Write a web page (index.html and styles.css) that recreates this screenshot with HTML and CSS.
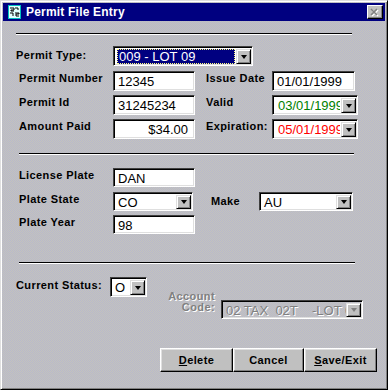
FILE: index.html
```html
<!DOCTYPE html>
<html lang="en">
<head>
    <meta charset="UTF-8">
    <title>Permit File Entry</title>
    <link rel="stylesheet" href="styles.css">
</head>
<body>

    <div class="window">
        <!-- title bar -->
        <div class="titlebar">
            <svg class="app-icon" width="13" height="14" viewBox="0 0 13 14">
                <rect x="0.5" y="0.5" width="12" height="13" fill="#ffffff" stroke="#00c0c0"/>
                <rect x="1" y="1" width="11" height="12" fill="#e0ffff"/>
                <path d="M2 3h4v2H3v1h3M7 3h3v2M2 8h3v3M7 8h4v1H8v2h3" fill="none" stroke="#000000" stroke-width="1"/>
            </svg>
            <span class="title">Permit File Entry</span>
            <span class="close-btn">
                <svg width="10" height="9" viewBox="0 0 10 9">
                    <path d="M2 2l6 6M8 2l-6 6" stroke="#ffffff" stroke-width="1.6"/>
                    <path d="M1 1l6 6M7 1l-6 6" stroke="#808080" stroke-width="1.6"/>
                </svg>
            </span>
        </div>

        <div class="content">
            <div class="sep sep-top"></div>

            <!-- permit -->
            <div class="row row-type">
                <label class="lbl lbl-type">Permit Type:</label>
                <div class="combo combo-type">
                    <div class="value selected"><span>009 - LOT 09</span></div>
                    <span class="arrow"></span>
                </div>
            </div>

            <div class="row row-indent row-2">
                <label class="lbl lbl-left">Permit Number</label>
                <div class="field field-left">12345</div>
                <label class="lbl lbl-right">Issue Date</label>
                <div class="field field-date">01/01/1999</div>
            </div>

            <div class="row row-indent row-3">
                <label class="lbl lbl-left">Permit Id</label>
                <div class="field field-left">31245234</div>
                <label class="lbl lbl-right">Valid</label>
                <div class="combo combo-date">
                    <div class="value green">03/01/1999</div>
                    <span class="arrow"></span>
                </div>
            </div>

            <div class="row row-indent row-3">
                <label class="lbl lbl-left">Amount Paid</label>
                <div class="field field-left money">$34.00</div>
                <label class="lbl lbl-right">Expiration:</label>
                <div class="combo combo-date">
                    <div class="value red">05/01/1999</div>
                    <span class="arrow"></span>
                </div>
            </div>

            <div class="sep sep-mid"></div>

            <!-- vehicle -->
            <div class="row row-indent row-5">
                <label class="lbl lbl-left">License Plate</label>
                <div class="field field-left short">DAN</div>
            </div>

            <div class="row row-indent row-6">
                <label class="lbl lbl-left">Plate State</label>
                <div class="combo combo-state short">
                    <div class="value">CO</div>
                    <span class="arrow"></span>
                </div>
                <label class="lbl lbl-make">Make</label>
                <div class="combo combo-make short">
                    <div class="value">AU</div>
                    <span class="arrow"></span>
                </div>
            </div>

            <div class="row row-indent row-7">
                <label class="lbl lbl-left">Plate Year</label>
                <div class="field field-left short">98</div>
            </div>

            <div class="sep sep-low"></div>

            <!-- status -->
            <div class="status-row">
                <label class="lbl lbl-status">Current Status:</label>
                <div class="combo combo-status">
                    <div class="value">O</div>
                    <span class="arrow"></span>
                </div>
                <div class="account">
                    <label class="lbl lbl-account">Account<br>Code:</label>
                    <div class="combo combo-account disabled">
                        <div class="value">02 TAX  02T    -LOT 02</div>
                        <span class="arrow"></span>
                    </div>
                </div>
            </div>

            <div class="buttons">
                <button class="btn btn-delete"><u>D</u>elete</button>
                <button class="btn btn-cancel">Cancel</button>
                <button class="btn btn-save"><u>S</u>ave/Exit</button>
            </div>
        </div>
    </div>

</body>
</html>
```

FILE: styles.css
```css
body {
    margin: 0;
    background-color: #ffffff;
    font-family: "Liberation Sans", Arial, sans-serif;
}

.window {
    width: 388px;
    height: 390px;
    box-sizing: border-box;
    padding: 2px;
    border: 1px solid;
    border-color: #dfdfdf #000000 #000000 #dfdfdf;
    box-shadow: inset 1px 1px #ffffff, inset -1px -1px #808080;
    background-color: #bfbfc4;
    background-image: repeating-conic-gradient(#c4c4bc 0 25%, #b8b8cc 0 50%);
    background-size: 2px 2px;
    display: flex;
    flex-direction: column;
}

/* title bar */
.titlebar {
    height: 18px;
    background-color: #000080;
    display: flex;
    align-items: center;
    padding: 0 2px 0 5px;
    color: #ffffff;
}

.app-icon {
    display: block;
}

.title {
    margin-left: 5px;
    font-weight: bold;
    font-size: 12px;
    letter-spacing: 0.2px;
}

.close-btn {
    margin-left: auto;
    width: 16px;
    height: 14px;
    box-sizing: border-box;
    background-color: #c0c0c0;
    border: 1px solid;
    border-color: #ffffff #000000 #000000 #ffffff;
    box-shadow: inset -1px -1px #808080;
    display: flex;
    align-items: center;
    justify-content: center;
}

.close-btn svg {
    display: block;
}

/* form area */
.content {
    padding: 0 8px 0 13px;
    display: flex;
    flex-direction: column;
}

.sep {
    height: 1px;
    background-color: #000000;
    border-bottom: 1px solid #ffffff;
}

.sep-top {
    margin-top: 12px;
    width: 336px;
}

.sep-mid {
    margin-top: 14px;
    margin-left: 3px;
    width: 335px;
}

.sep-low {
    margin-top: 28px;
    margin-left: 3px;
    width: 336px;
}

.row {
    display: flex;
    align-items: flex-start;
}

.row-indent {
    padding-left: 3px;
}

.row-type {
    margin-top: 11px;
}

.row-2 {
    margin-top: 5px;
}

.row-3 {
    margin-top: 4px;
}

.row-5 {
    margin-top: 13px;
}

.row-6 {
    margin-top: 5px;
}

.row-7 {
    margin-top: 4px;
}

.lbl {
    font-size: 11px;
    font-weight: bold;
    line-height: 13px;
    color: #000000;
    padding-top: 1px;
    letter-spacing: 0.4px;
    white-space: nowrap;
}

.lbl-type {
    width: 97px;
    padding-top: 3px;
}

.lbl-left {
    width: 94px;
}

.lbl-right {
    width: 66px;
    margin-left: 11px;
}

.lbl-make {
    width: 48px;
    margin-left: 18px;
    padding-top: 3px;
}

/* sunken boxes */
.field,
.combo {
    box-sizing: border-box;
    height: 20px;
    background-color: #ffffff;
    border: 1px solid;
    border-color: #404040 #ffffff #ffffff #404040;
    box-shadow: inset 1px 1px #000000, inset -1px -1px #dfdfdf;
    font-size: 13px;
    line-height: 18px;
    color: #000000;
    white-space: nowrap;
    overflow: hidden;
}

.field {
    padding: 1px 4px 0 4px;
}

.short {
    height: 19px;
    line-height: 17px;
}

.field-left {
    width: 82px;
}

.field-date {
    width: 83px;
}

.money {
    text-align: right;
    padding-right: 6px;
}

.combo {
    display: flex;
    padding: 2px 1px 1px 2px;
}

.combo .value {
    flex: 1;
    overflow: hidden;
    padding-left: 2px;
    line-height: 16px;
}

.short .value {
    line-height: 15px;
}

.combo .arrow {
    width: 15px;
    flex: none;
    box-sizing: border-box;
    background-color: #c0c0c0;
    border: 1px solid;
    border-color: #dfdfdf #000000 #000000 #dfdfdf;
    box-shadow: inset 1px 1px #ffffff, inset -1px -1px #808080;
    display: flex;
    align-items: center;
    justify-content: center;
}

.combo .arrow::after {
    content: "";
    border-left: 3.5px solid transparent;
    border-right: 3.5px solid transparent;
    border-top: 4px solid #000000;
}

.combo-type {
    width: 140px;
}

.combo-type .value {
    padding: 0 0 0 1px;
}

.selected span {
    display: block;
    height: 100%;
    box-sizing: border-box;
    background-color: #000080;
    color: #ffffff;
    outline: 1px dotted #ffff80;
    outline-offset: -1px;
    padding-left: 2px;
    margin-right: 1px;
}

.combo-date {
    width: 86px;
}

.combo-date .value {
    padding-left: 3px;
    margin-right: 1px;
}

.green {
    color: #008000;
}

.red {
    color: #ff0000;
}

.combo-state {
    width: 80px;
}

.combo-make {
    width: 94px;
}

/* status */
.status-row {
    display: flex;
    align-items: flex-start;
    margin-top: 13px;
}

.lbl-status {
    width: 94px;
    padding-top: 2px;
}

.combo-status {
    width: 37px;
}

.account {
    display: flex;
    align-items: flex-start;
    margin-left: 21px;
    padding-top: 13px;
}

.lbl-account {
    width: 47px;
    text-align: right;
    line-height: 11px;
    color: #808080;
    text-shadow: 1px 1px #ffffff;
}

.combo-account {
    width: 142px;
    height: 19px;
    margin-left: 6px;
    margin-top: 10px;
}

.disabled {
    background: transparent;
}

.disabled .value {
    color: #808080;
    text-shadow: 1px 1px #ffffff;
    white-space: pre;
    line-height: 15px;
}

.disabled .arrow::after {
    border-top-color: #808080;
}

/* buttons */
.buttons {
    display: flex;
    justify-content: flex-end;
    margin-top: 29px;
}

.btn {
    height: 24px;
    box-sizing: border-box;
    padding: 0;
    font-family: "Liberation Sans", Arial, sans-serif;
    font-size: 11px;
    font-weight: bold;
    letter-spacing: 0.4px;
    color: #000000;
    background-color: #c0c0c0;
    border: 1px solid;
    border-color: #ffffff #000000 #000000 #ffffff;
    box-shadow: inset -1px -1px #808080, inset 1px 1px #dfdfdf;
    cursor: pointer;
}

.btn-delete {
    width: 73px;
}

.btn-cancel {
    width: 71px;
}

.btn-save {
    width: 73px;
}
```
